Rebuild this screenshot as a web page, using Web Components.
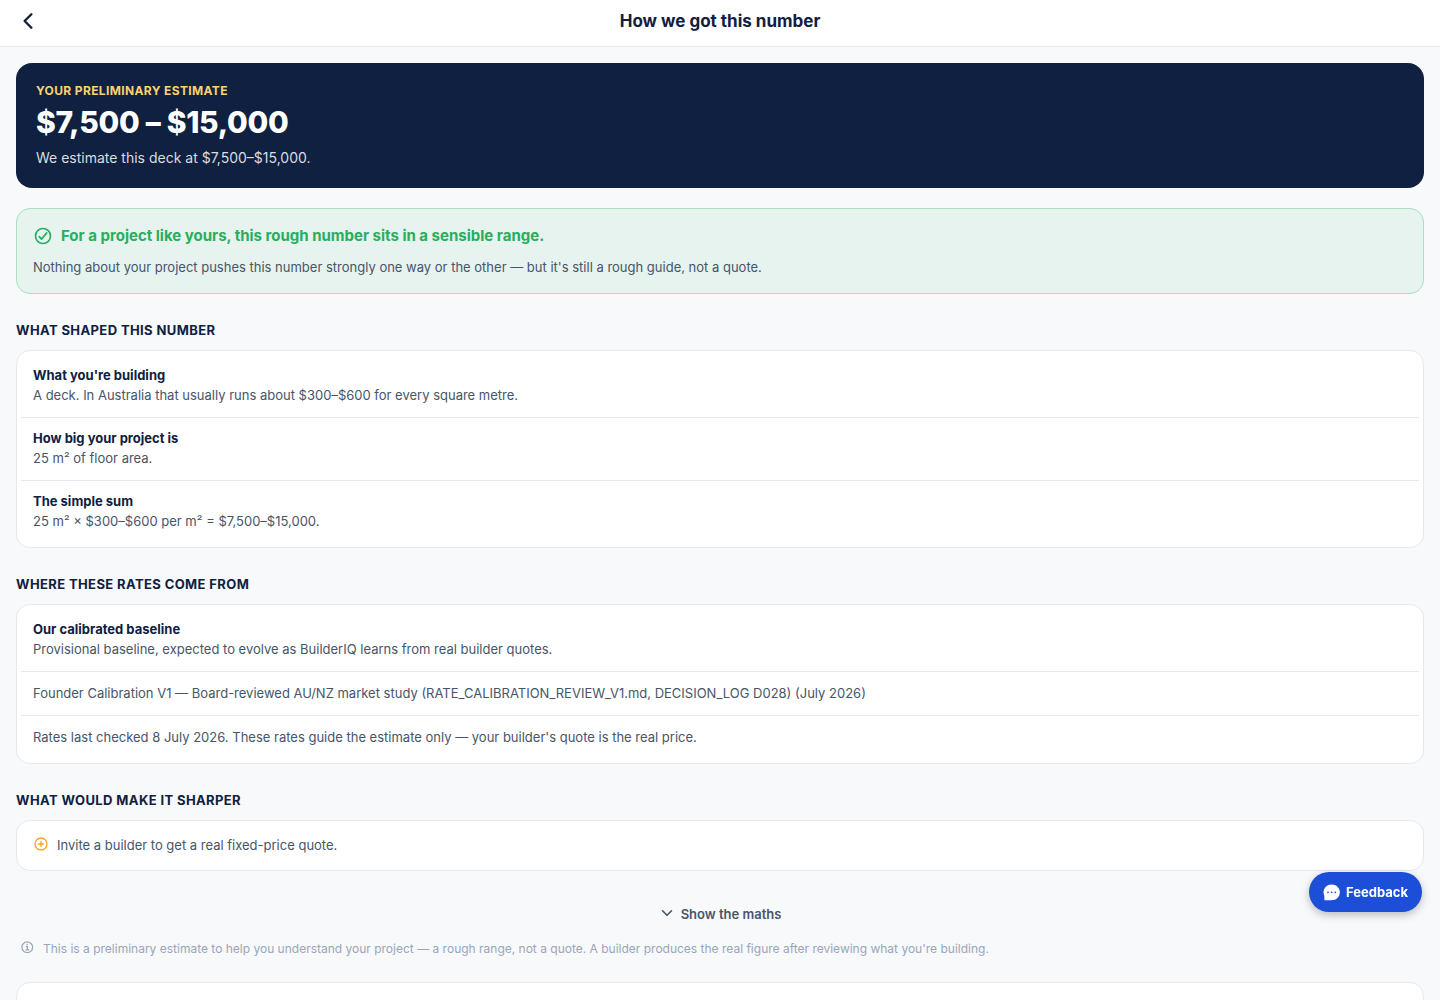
<!DOCTYPE html>
<html lang="en">
<head>
<meta charset="utf-8">
<meta name="viewport" content="width=device-width, initial-scale=1">
<title>How we got this number</title>
<style>
  body {
    margin: 0;
    background: #f7f9fb;
    color: #475569;
    font: 13px/19px Inter, "Liberation Sans", sans-serif;
    --navy: #0f2040;
    --line: #e5e9f0;
  }
</style>
</head>
<body>
<estimate-page></estimate-page>

<script>
  const ring = '<path d="M448 256c0-106-86-192-192-192S64 150 64 256s86 192 192 192 192-86 192-192z"/>';

  const icons = {
    back: '<path stroke-width="52" d="M328 112L184 256l144 144"/>',
    down: '<path stroke-width="52" d="M112 184l144 144 144-144"/>',
    check: ring + '<path d="M352 176L217.6 336 160 272"/>',
    add: ring + '<path d="M256 176v160M336 256H176"/>',
    info: '<path d="M248 64C146.39 64 64 146.39 64 248s82.39 184 184 184 184-82.39 184-184S349.61 64 248 64z"/><path d="M220 220h32v116M208 340h88"/><circle cx="248" cy="156" r="26" fill="currentColor" stroke="none"/>',
    chat: '<path fill="currentColor" stroke="none" fill-rule="evenodd" d="M262 12C126 12 16 118 16 250c0 36 8 70 24 102v114c0 16 10 26 26 26h196c136 0 246-108 246-242S398 12 262 12zM152 278a26 26 0 110-52 26 26 0 010 52zm110 0a26 26 0 110-52 26 26 0 010 52zm110 0a26 26 0 110-52 26 26 0 010 52z"/>'
  };

  class UiIcon extends HTMLElement {
    connectedCallback() {
      const size = this.getAttribute('size') || 16;
      this.attachShadow({ mode: 'open' }).innerHTML = `
        <style>
          :host { display: block; flex: none; }
          svg { display: block; }
        </style>
        <svg width="${size}" height="${size}" viewBox="0 0 512 512" fill="none" stroke="currentColor"
          stroke-width="42" stroke-linecap="round" stroke-linejoin="round" aria-hidden="true">
          ${icons[this.getAttribute('name')]}
        </svg>
      `;
    }
  }

  class PageHeader extends HTMLElement {
    connectedCallback() {
      this.attachShadow({ mode: 'open' }).innerHTML = `
        <style>
          :host { display: block; background: #ffffff; border-bottom: 1px solid var(--line); color: var(--navy); }
          header {
            display: grid;
            grid-template-columns: 24px 1fr 24px;
            align-items: center;
            padding: 8px 16px 12px;
          }
          button { padding: 0; border: 0; background: none; color: inherit; cursor: pointer; }
          h1 { margin: 0; font-size: 17px; line-height: 26px; font-weight: 700; text-align: center; }
        </style>
        <header>
          <button type="button" aria-label="Back"><ui-icon name="back" size="24"></ui-icon></button>
          <h1><slot></slot></h1>
        </header>
      `;
    }
  }

  class EstimateHero extends HTMLElement {
    connectedCallback() {
      this.attachShadow({ mode: 'open' }).innerHTML = `
        <style>
          :host { display: block; padding: 20px; border-radius: 16px; background: var(--navy); color: #ffffff; }
          p { margin: 0; }
          .label { color: #fdd170; font-size: 12px; line-height: 15px; font-weight: 700; letter-spacing: 0.03em; text-transform: uppercase; }
          .amount { margin: 4px 0 6px; font-size: 30px; line-height: 40px; font-weight: 800; letter-spacing: -0.01em; }
          .note { font-size: 14px; line-height: 20px; color: rgba(255, 255, 255, 0.85); }
        </style>
        <p class="label"><slot name="label"></slot></p>
        <p class="amount"><slot name="amount"></slot></p>
        <p class="note"><slot></slot></p>
      `;
    }
  }

  class VerdictCard extends HTMLElement {
    connectedCallback() {
      this.attachShadow({ mode: 'open' }).innerHTML = `
        <style>
          :host { display: block; margin-top: 20px; padding: 16px; border: 1px solid #a9dfc2; border-radius: 14px; background: #e6f3ee; }
          .head { display: flex; align-items: flex-end; gap: 8px; color: #27ae60; }
          h2 { margin: 0; font-size: 15px; line-height: 21px; font-weight: 700; }
          p { margin: 11px 0 0; line-height: 20px; }
        </style>
        <div class="head">
          <ui-icon name="check" size="20"></ui-icon>
          <h2><slot name="title"></slot></h2>
        </div>
        <p><slot></slot></p>
      `;
    }
  }

  class InfoCard extends HTMLElement {
    connectedCallback() {
      this.attachShadow({ mode: 'open' }).innerHTML = `
        <style>
          :host { display: block; padding: 4px; border: 1px solid var(--line); border-radius: 14px; background: #ffffff; }
        </style>
        <slot></slot>
      `;
    }
  }

  class InfoSection extends HTMLElement {
    connectedCallback() {
      this.attachShadow({ mode: 'open' }).innerHTML = `
        <style>
          :host { display: block; margin-top: 28px; }
          h2 { margin: 0 0 12px; color: var(--navy); font-size: 13px; line-height: 16px; font-weight: 700; letter-spacing: 0.03em; text-transform: uppercase; }
        </style>
        <section>
          <h2>${this.getAttribute('heading')}</h2>
          <info-card><slot></slot></info-card>
        </section>
      `;
    }
  }

  class InfoRow extends HTMLElement {
    connectedCallback() {
      const label = this.getAttribute('label');
      this.attachShadow({ mode: 'open' }).innerHTML = `
        <style>
          :host { display: block; padding: 12px; }
          :host(:not(:last-of-type)) { border-bottom: 1px solid var(--line); }
          h3 { margin: 0 0 2px; color: var(--navy); font-size: 13px; line-height: 17px; font-weight: 700; }
          p { margin: 0; }
        </style>
        ${label ? `<h3>${label}</h3>` : ''}
        <p><slot></slot></p>
      `;
    }
  }

  class TipRow extends HTMLElement {
    connectedCallback() {
      this.attachShadow({ mode: 'open' }).innerHTML = `
        <style>
          :host { display: flex; align-items: flex-start; gap: 8px; padding: 11px 12px; }
          ui-icon { color: #f5a623; }
        </style>
        <ui-icon name="add" size="16"></ui-icon>
        <span><slot></slot></span>
      `;
    }
  }

  class MathsToggle extends HTMLElement {
    connectedCallback() {
      this.attachShadow({ mode: 'open' }).innerHTML = `
        <style>
          :host { display: flex; justify-content: center; margin-top: 22px; }
          button {
            display: flex;
            gap: 6px;
            padding: 12px;
            border: 0;
            background: none;
            color: inherit;
            font: inherit;
            font-weight: 600;
            cursor: pointer;
          }
        </style>
        <button type="button" aria-expanded="false"><ui-icon name="down" size="16"></ui-icon><slot></slot></button>
      `;
    }
  }

  class PageDisclaimer extends HTMLElement {
    connectedCallback() {
      this.attachShadow({ mode: 'open' }).innerHTML = `
        <style>
          :host { display: flex; align-items: flex-start; gap: 8px; margin: 4px 0 24px; padding: 0 4px; color: #9aa5b8; }
          p { margin: 0; font-size: 12px; line-height: 18px; }
        </style>
        <ui-icon name="info" size="15"></ui-icon>
        <p><slot></slot></p>
      `;
    }
  }

  class FeedbackButton extends HTMLElement {
    connectedCallback() {
      this.attachShadow({ mode: 'open' }).innerHTML = `
        <style>
          :host { position: fixed; right: 18px; bottom: 88px; }
          button {
            display: flex;
            align-items: center;
            gap: 6px;
            padding: 11px 14px;
            border: 0;
            border-radius: 20px;
            background: #1d4ed8;
            color: #ffffff;
            font: 700 13px/18px Inter, "Liberation Sans", sans-serif;
            box-shadow: 0 3px 8px rgba(0, 0, 0, 0.25);
            cursor: pointer;
          }
        </style>
        <button type="button"><ui-icon name="chat" size="17"></ui-icon><slot></slot></button>
      `;
    }
  }

  class EstimatePage extends HTMLElement {
    connectedCallback() {
      this.attachShadow({ mode: 'open' }).innerHTML = `
        <style>
          :host { display: block; height: 100vh; overflow: hidden; }
          main { padding: 16px; }
          .next { min-height: 80px; }
        </style>
        <page-header>How we got this number</page-header>
        <main>
          <estimate-hero>
            <span slot="label">Your preliminary estimate</span>
            <span slot="amount">$7,500 – $15,000</span>
            We estimate this deck at $7,500–$15,000.
          </estimate-hero>
          <verdict-card>
            <span slot="title">For a project like yours, this rough number sits in a sensible range.</span>
            Nothing about your project pushes this number strongly one way or the other — but it's still a rough guide, not a quote.
          </verdict-card>
          <info-section heading="What shaped this number">
            <info-row label="What you're building">A deck. In Australia that usually runs about $300–$600 for every square metre.</info-row>
            <info-row label="How big your project is">25 m² of floor area.</info-row>
            <info-row label="The simple sum">25 m² × $300–$600 per m² = $7,500–$15,000.</info-row>
          </info-section>
          <info-section heading="Where these rates come from">
            <info-row label="Our calibrated baseline">Provisional baseline, expected to evolve as BuilderIQ learns from real builder quotes.</info-row>
            <info-row>Founder Calibration V1 — Board-reviewed AU/NZ market study (RATE_CALIBRATION_REVIEW_V1.md, DECISION_LOG D028) (July 2026)</info-row>
            <info-row>Rates last checked 8 July 2026. These rates guide the estimate only — your builder's quote is the real price.</info-row>
          </info-section>
          <info-section heading="What would make it sharper">
            <tip-row>Invite a builder to get a real fixed-price quote.</tip-row>
          </info-section>
          <maths-toggle>Show the maths</maths-toggle>
          <page-disclaimer>This is a preliminary estimate to help you understand your project — a rough range, not a quote. A builder produces the real figure after reviewing what you're building.</page-disclaimer>
          <info-card class="next"></info-card>
        </main>
        <feedback-button>Feedback</feedback-button>
      `;
    }
  }

  customElements.define('ui-icon', UiIcon);
  customElements.define('page-header', PageHeader);
  customElements.define('estimate-hero', EstimateHero);
  customElements.define('verdict-card', VerdictCard);
  customElements.define('info-card', InfoCard);
  customElements.define('info-section', InfoSection);
  customElements.define('info-row', InfoRow);
  customElements.define('tip-row', TipRow);
  customElements.define('maths-toggle', MathsToggle);
  customElements.define('page-disclaimer', PageDisclaimer);
  customElements.define('feedback-button', FeedbackButton);
  customElements.define('estimate-page', EstimatePage);
</script>
</body>
</html>
